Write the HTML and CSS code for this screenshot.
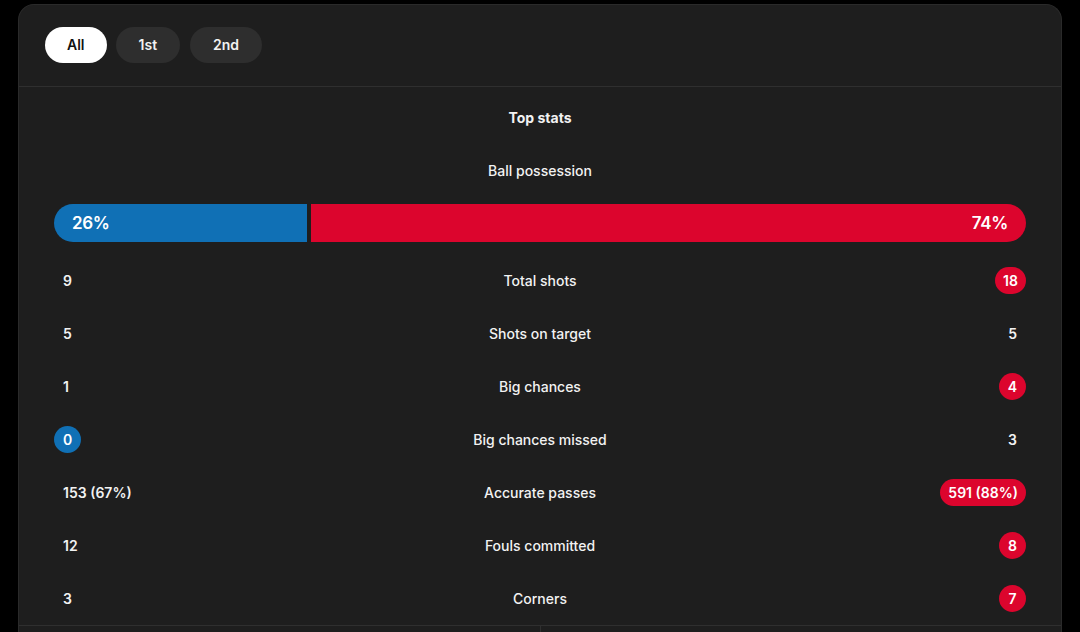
FILE: index.html
```html
<!DOCTYPE html>
<html lang="en">
<head>
<meta charset="utf-8">
<title>Match statistics</title>
<link rel="stylesheet" href="styles.css">
</head>
<body>
<div class="card">
  <div class="tabs">
    <button class="tab active">All</button>
    <button class="tab">1st</button>
    <button class="tab">2nd</button>
  </div>
  <div class="content">
    <div class="title">Top stats</div>
    <div class="label possession-label">Ball possession</div>
    <div class="bar">
      <div class="bar-home" style="width: 26%">26%</div>
      <div class="bar-away">74%</div>
    </div>
    <div class="rows">
      <div class="row"><div class="side left"><span class="val">9</span></div><div class="label">Total shots</div><div class="side right"><span class="val away">18</span></div></div>
      <div class="row"><div class="side left"><span class="val">5</span></div><div class="label">Shots on target</div><div class="side right"><span class="val">5</span></div></div>
      <div class="row"><div class="side left"><span class="val">1</span></div><div class="label">Big chances</div><div class="side right"><span class="val away">4</span></div></div>
      <div class="row"><div class="side left"><span class="val home">0</span></div><div class="label">Big chances missed</div><div class="side right"><span class="val">3</span></div></div>
      <div class="row"><div class="side left"><span class="val">153 (67%)</span></div><div class="label">Accurate passes</div><div class="side right"><span class="val away">591 (88%)</span></div></div>
      <div class="row"><div class="side left"><span class="val">12</span></div><div class="label">Fouls committed</div><div class="side right"><span class="val away">8</span></div></div>
      <div class="row"><div class="side left"><span class="val">3</span></div><div class="label">Corners</div><div class="side right"><span class="val away">7</span></div></div>
    </div>
  </div>
  <div class="footer">
    <div class="half"></div>
    <div class="half"></div>
  </div>
</div>
</body>
</html>
```

FILE: styles.css
```css
html, body {
  background: #000;
}
body {
  margin: 4px 18px 0;
  font-family: Inter, "Noto Sans", "Liberation Sans", sans-serif;
  color: #f2f2f2;
  overflow: hidden;
}
.card {
  background: #1e1e1e;
  border: 1px solid #2a2a2a;
  border-bottom: none;
  border-radius: 16px 16px 0 0;
}
.tabs {
  display: flex;
  gap: 9px;
  padding: 22px 26px 23px;
  border-bottom: 1px solid #2f2f2f;
}
.tab {
  height: 36px;
  border: none;
  border-radius: 18px;
  background: #2e2e2e;
  color: #f2f2f2;
  font-family: inherit;
  font-size: 14px;
  font-weight: 600;
  padding: 0 22px;
  line-height: 36px;
}
.tab:nth-child(2) { padding: 0 23px; }
.tab:nth-child(3) { padding: 0 23px; margin-left: 1px; }
.tab.active {
  background: #fff;
  color: #111;
}
.content {
  padding: 0 35px;
}
.title {
  text-align: center;
  font-size: 14px;
  font-weight: 700;
  line-height: 20px;
  padding-top: 21px;
}
.label {
  text-align: center;
  font-size: 14px;
  font-weight: 500;
  line-height: 20px;
}
.possession-label {
  padding-top: 33px;
  padding-bottom: 23px;
}
.bar {
  display: flex;
  gap: 4px;
  height: 38px;
}
.bar-home, .bar-away {
  display: flex;
  align-items: center;
  box-sizing: border-box;
  font-size: 17px;
  font-weight: 600;
  letter-spacing: -0.3px;
  color: #fff;
}
.bar-home {
  flex: none;
  background: #1070b5;
  border-radius: 19px 0 0 19px;
  padding-left: 18px;
}
.bar-away {
  flex: 1;
  background: #dc052d;
  border-radius: 0 19px 19px 0;
  justify-content: flex-end;
  padding-right: 18px;
}
.rows {
  padding-top: 12px;
}
.row {
  display: grid;
  grid-template-columns: 1fr auto 1fr;
  align-items: center;
  height: 53px;
}
.side { display: flex; }
.side.right { justify-content: flex-end; }
.val {
  display: inline-flex;
  align-items: center;
  justify-content: center;
  height: 27px;
  min-width: 27px;
  box-sizing: border-box;
  padding: 0 9px;
  border-radius: 14px;
  font-size: 14px;
  font-weight: 600;
}
.side.left .val:not(.home) { justify-content: flex-start; min-width: 0; }
.side.right .val:not(.away) { justify-content: flex-end; min-width: 0; }
.val.home { background: #1070b5; color: #fff; padding: 0; }
.val.away { background: #dc052d; color: #fff; padding: 0 8px; }
.footer {
  display: flex;
  border-top: 1px solid #2f2f2f;
  height: 40px;
}
.half { flex: 1; }
.half + .half { border-left: 1px solid #2f2f2f; }
```
